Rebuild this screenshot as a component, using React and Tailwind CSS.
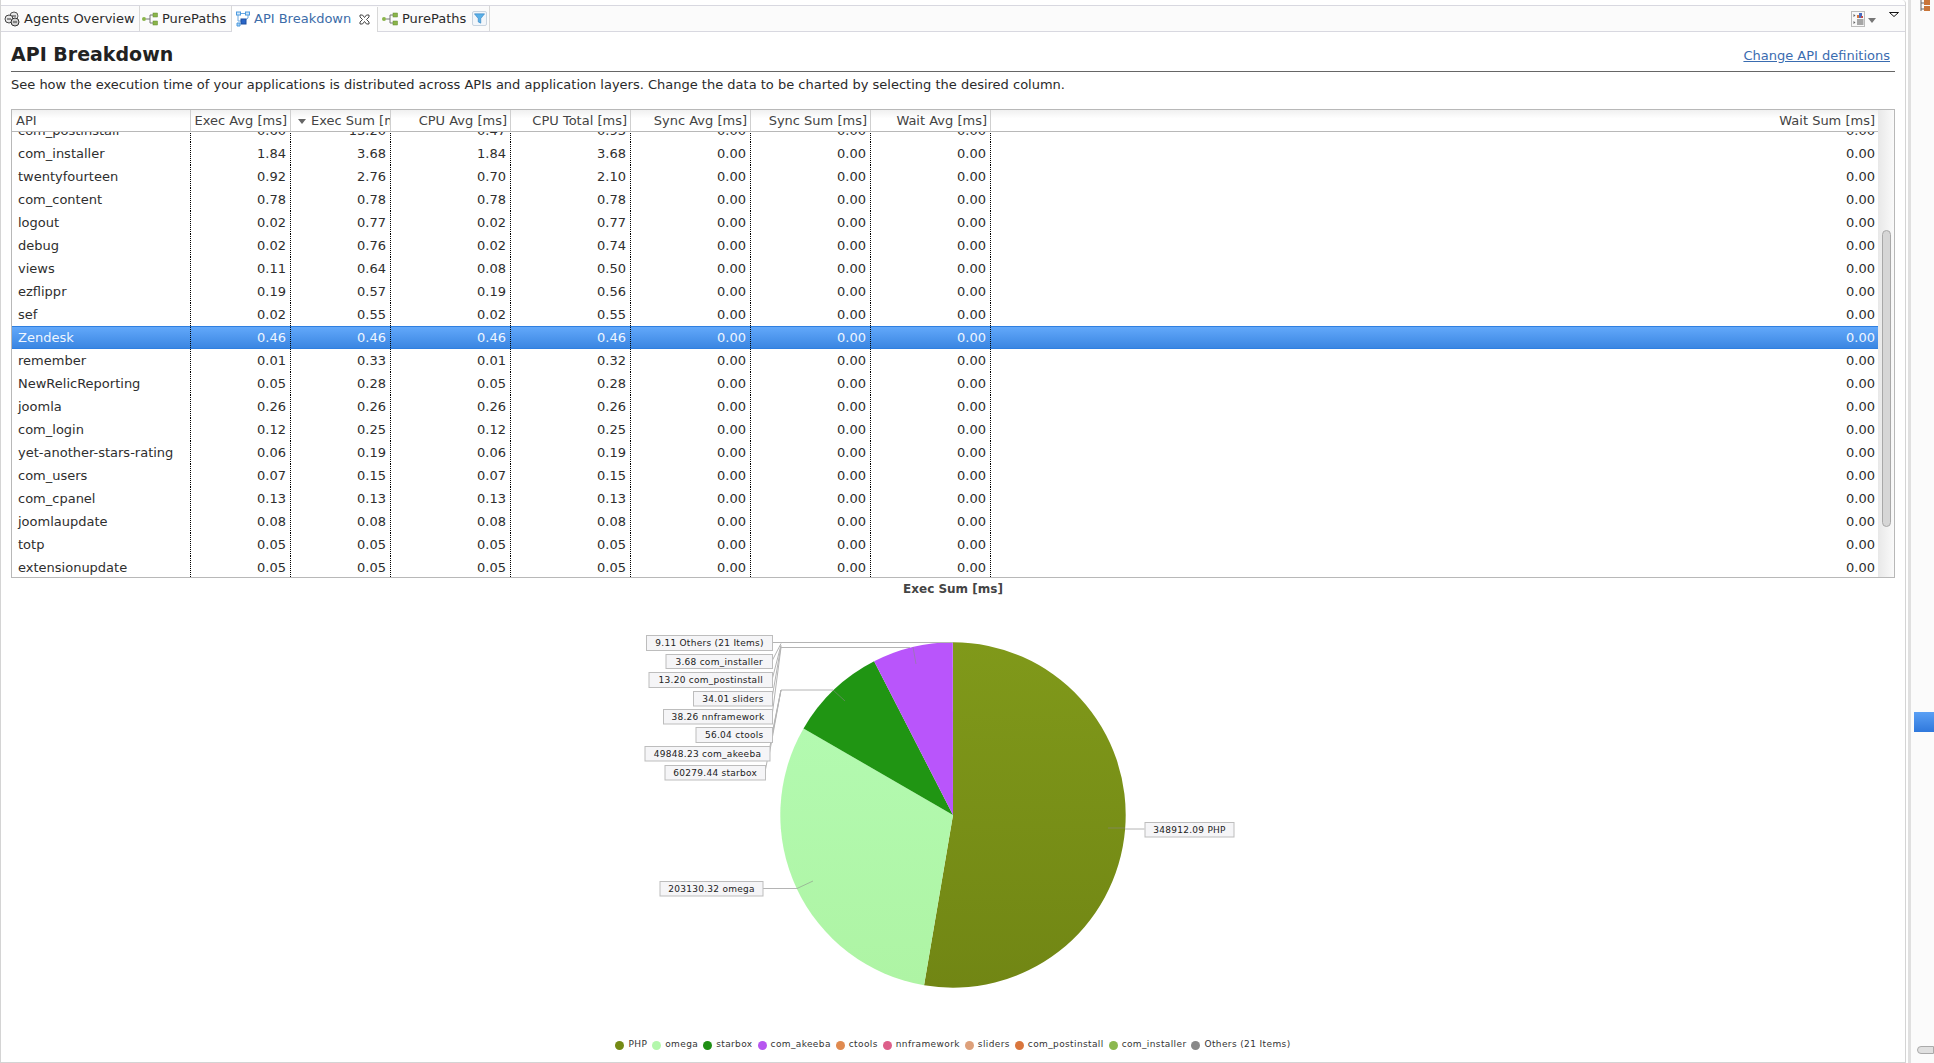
const rows = [
  ["com_postinstall", "0.60", "13.20", "0.47", "0.93"],
  ["com_installer", "1.84", "3.68", "1.84", "3.68"],
  ["twentyfourteen", "0.92", "2.76", "0.70", "2.10"],
  ["com_content", "0.78", "0.78", "0.78", "0.78"],
  ["logout", "0.02", "0.77", "0.02", "0.77"],
  ["debug", "0.02", "0.76", "0.02", "0.74"],
  ["views", "0.11", "0.64", "0.08", "0.50"],
  ["ezflippr", "0.19", "0.57", "0.19", "0.56"],
  ["sef", "0.02", "0.55", "0.02", "0.55"],
  ["Zendesk", "0.46", "0.46", "0.46", "0.46"],
  ["remember", "0.01", "0.33", "0.01", "0.32"],
  ["NewRelicReporting", "0.05", "0.28", "0.05", "0.28"],
  ["joomla", "0.26", "0.26", "0.26", "0.26"],
  ["com_login", "0.12", "0.25", "0.12", "0.25"],
  ["yet-another-stars-rating", "0.06", "0.19", "0.06", "0.19"],
  ["com_users", "0.07", "0.15", "0.07", "0.15"],
  ["com_cpanel", "0.13", "0.13", "0.13", "0.13"],
  ["joomlaupdate", "0.08", "0.08", "0.08", "0.08"],
  ["totp", "0.05", "0.05", "0.05", "0.05"],
  ["extensionupdate", "0.05", "0.05", "0.05", "0.05"],
];

const gridCols = "grid grid-cols-[179px_100px_100px_120px_120px_120px_120px_120px_1fr]";

const legend = [
  ["PHP", "bg-[#748a14]"],
  ["omega", "bg-[#b3f7ac]"],
  ["starbox", "bg-[#1f8f14]"],
  ["com_akeeba", "bg-[#b756f0]"],
  ["ctools", "bg-[#e08a4f]"],
  ["nnframework", "bg-[#dd5f8a]"],
  ["sliders", "bg-[#dda07a]"],
  ["com_postinstall", "bg-[#d9763d]"],
  ["com_installer", "bg-[#8cb84f]"],
  ["Others (21 Items)", "bg-[#888888]"],
];

// x, y, w, h, text
const labels = [
  [646, 635, 126, 15, "9.11 Others (21 Items)"],
  [665.5, 654, 106.5, 14, "3.68 com_installer"],
  [648.5, 672, 123.5, 15, "13.20 com_postinstall"],
  [693, 691, 79, 14.5, "34.01 sliders"],
  [663, 709, 109, 14.5, "38.26 nnframework"],
  [695.5, 727, 76.5, 15, "56.04 ctools"],
  [644.5, 746, 125, 14.5, "49848.23 com_akeeba"],
  [664.5, 765, 100.5, 14.5, "60279.44 starbox"],
  [1144.5, 822, 89, 14.5, "348912.09 PHP"],
  [659.5, 881, 103, 14.5, "203130.32 omega"],
];

const leaders = [
  "M772 642.5H953",
  "M772 661L781 643.5",
  "M772 680L781 645",
  "M772 698L781 646",
  "M772 716L781 647.5H910",
  "M772 734L781 690H833",
  "M769.5 753L781 690",
  "M765 772L781 690",
  "M1144.5 829H1125",
  "M762.5 888.5H797",
];

const slices = [
  [348912.09, "url(#phpFill)"],
  [203130.32, "url(#omegaFill)"],
  [60279.44, "#209513"],
  [49848.23, "#b955fb"],
  [154.26, "#b955fb"],
];

function piePaths() {
  const cx = 953, cy = 815, r = 172.7;
  const total = slices.reduce((s, x) => s + x[0], 0);
  let a = 0;
  return slices.map(([v, fill]) => {
    const b = a + (v / total) * Math.PI * 2;
    const d = `M${cx} ${cy}L${cx + r * Math.sin(a)} ${cy - r * Math.cos(a)}A${r} ${r} 0 ${b - a > Math.PI ? 1 : 0} 1 ${cx + r * Math.sin(b)} ${cy - r * Math.cos(b)}Z`;
    a = b;
    return <path key={v} d={d} fill={fill} />;
  });
}

function AgentsIcon() {
  return (
    <svg width="16" height="16" viewBox="0 0 16 16" className="shrink-0">
      <circle cx="10" cy="5" r="4" fill="#e8e8e8" stroke="#555" />
      <circle cx="5" cy="8" r="4" fill="#e8e8e8" stroke="#444" />
      <circle cx="11" cy="11" r="4" fill="#d0d0d0" stroke="#333" />
      <path d="M3 8h4M9 11h4M8 5h4" stroke="#333" />
    </svg>
  );
}

function PurePathIcon() {
  return (
    <svg width="16" height="14" viewBox="0 0 16 14" className="shrink-0">
      <path d="M4 7h4M8 3v8M8 3h3M8 11h3" stroke="#777" fill="none" />
      <circle cx="2" cy="7" r="2" fill="#8ab44a" />
      <rect x="11" y="1" width="4.5" height="4" fill="#8ab44a" stroke="#5f8a2c" strokeWidth="0.5" />
      <rect x="11" y="9" width="4.5" height="4" fill="#8ab44a" stroke="#5f8a2c" strokeWidth="0.5" />
    </svg>
  );
}

function BreakdownIcon() {
  return (
    <svg width="14" height="16" viewBox="0 0 14 16" className="shrink-0">
      <path d="M4 2.5h6M2 4v6h3M12 4v3l-4 3" stroke="#6aa8e0" fill="none" />
      <rect x="0.5" y="1" width="4" height="3" fill="#d4e8f8" stroke="#4b9ae0" />
      <rect x="9.5" y="1" width="4" height="3" fill="#d4e8f8" stroke="#4b9ae0" />
      <rect x="5" y="8" width="5" height="5" fill="#2a66c8" stroke="#1d4fa0" />
      <path d="M1 12h3v3H1z" fill="#a8d0f0" stroke="#4b9ae0" />
    </svg>
  );
}

function CloseIcon() {
  return (
    <svg width="11" height="11" viewBox="0 0 11 11" className="shrink-0">
      <path d="M1 1h2.5l2 2.5L7.5 1H10v2L7.5 5.5 10 8v2H7.5l-2-2.5-2 2.5H1V8l2.5-2.5L1 3z" fill="#fff" stroke="#333" strokeWidth="0.9" />
    </svg>
  );
}

function FilterIcon() {
  return (
    <span className="flex h-[15px] w-[15px] shrink-0 items-center justify-center rounded-[2px] border border-[#c8d4e0] bg-[#f2f6fa]">
      <svg width="11" height="11" viewBox="0 0 13 13">
        <path d="M0.5 1h12L8 6.5V12L5 10.5v-4z" fill="#5ab0e8" stroke="#2f7fc0" strokeWidth="0.7" />
      </svg>
    </span>
  );
}

function ViewMenuIcon() {
  return (
    <svg width="14" height="16" viewBox="0 0 14 16" className="shrink-0">
      <rect x="0.5" y="0.5" width="13" height="15" fill="#f8f8f8" stroke="#bbb" />
      <path d="M2.5 3l2 1.5-2 1.5zM2.5 10l2 1.5-2 1.5z" fill="#666" />
      <rect x="6" y="4" width="3" height="3" fill="#d9763d" />
      <rect x="8" y="2" width="3" height="5" fill="#4a6cc0" />
      <rect x="10" y="5" width="2" height="2" fill="#c05050" />
      <path d="M6 9h6.5M6 11h6.5M6 13h6.5" stroke="#555" />
    </svg>
  );
}

function Tab({ icon, label, active, children, className }) {
  return (
    <div className={`flex h-full items-center border-r border-[#d8d8d8] ${active ? "-mb-px bg-white text-[#3c6ca8]" : "text-[#2a2a2a]"} ${className}`}>
      {icon}
      <span className="whitespace-nowrap">{label}</span>
      {children}
    </div>
  );
}

function HeaderCell({ children, align = "text-right", className = "" }) {
  return (
    <div className={`overflow-hidden whitespace-nowrap border-r border-[#cfcfcf] pr-[3px] leading-[22px] text-[#444] ${align} ${className}`}>
      {children}
    </div>
  );
}

function Row({ cols }) {
  const selected = cols[0] === "Zendesk";
  const values = [...cols.slice(1), "0.00", "0.00", "0.00"];
  const cell = selected ? "leading-[21px]" : "pt-px leading-[22px]";
  return (
    <div className={`${gridCols} h-[23px] ${selected ? "border-t border-b border-[#2f7fe0] bg-gradient-to-b from-[#62a8fa] to-[#3a86e2] text-[#eef5ff]" : "text-[#2e2e2e]"}`}>
      <div className={`border-r border-dotted border-black pl-[6px] ${cell}`}>{cols[0]}</div>
      {values.map((v, i) => (
        <div key={i} className={`border-r border-dotted border-black pr-[4px] text-right ${cell}`}>{v}</div>
      ))}
      <div className={`pr-[3px] text-right ${cell}`}>0.00</div>
    </div>
  );
}

export default function App() {
  return (
    <div className="flex h-[1063px] w-[1934px] overflow-hidden bg-white font-['DejaVu_Sans',sans-serif] text-[13px]">
      <div className="flex h-full w-[1906px] shrink-0 flex-col rounded-tr-[4px] border-r border-b border-l border-[#d4d4d4] pt-[5px]">
        {/* tab strip */}
        <div className="flex h-[27px] shrink-0 items-center border-t border-b border-[#d8d8e0] bg-[#fbfbfb]">
          <Tab icon={<AgentsIcon />} label="Agents Overview" className="w-[139px] gap-[4px] pl-[3px]" />
          <Tab icon={<PurePathIcon />} label="PurePaths" className="w-[92px] gap-[4px] pl-[2px]" />
          <Tab icon={<BreakdownIcon />} label="API Breakdown" active className="w-[146px] gap-[4px] pl-[4px]">
            <span className="ml-[4px] flex"><CloseIcon /></span>
          </Tab>
          <Tab icon={<PurePathIcon />} label="PurePaths" className="w-[112px] gap-[4px] pl-[4px]">
            <span className="ml-[2px] flex"><FilterIcon /></span>
          </Tab>
          <div className="ml-auto flex h-full items-start pr-[6px] pt-[5px]">
            <ViewMenuIcon />
            <svg width="8" height="5" viewBox="0 0 8 5" className="ml-[3px] mt-[7px]">
              <path d="M0 0h8L4 5z" fill="#777" />
            </svg>
            <svg width="10" height="5" viewBox="0 0 10 5" className="ml-[13px] mt-[1px]">
              <path d="M0.5 0.5h9L5 4.5z" fill="#fff" stroke="#111" />
            </svg>
          </div>
        </div>

        {/* page header */}
        <div className="mx-[10px] flex h-[40px] shrink-0 items-end justify-between border-b border-[#666] pb-[4px] pr-[5px]">
          <h1 className="-mb-px text-[19px] font-bold leading-[28px] text-[#222]">API Breakdown</h1>
          <a className="mb-px leading-[20px] text-[#3a6cb0] underline">Change API definitions</a>
        </div>
        <p className="mx-[10px] mt-[2px] h-[22px] shrink-0 leading-[22px] text-[#2a2a2a]">
          See how the execution time of your applications is distributed across APIs and application layers. Change the data to be charted by selecting the desired column.
        </p>

        {/* table */}
        <div className="mx-[10px] mt-[13px] flex h-[469px] shrink-0 border border-[#b8b8b8]">
          <div className="flex min-w-0 flex-1 flex-col">
            <div className={`${gridCols} h-[22px] shrink-0 border-b border-[#b8b8b8] bg-gradient-to-b from-[#f0f0f0] to-white to-40%`}>
              <HeaderCell align="text-left" className="pl-[4px]">API</HeaderCell>
              <HeaderCell>Exec Avg [ms]</HeaderCell>
              <HeaderCell align="text-left" className="pl-[7px]">
                <span className="mr-[5px] inline-block h-0 w-0 border-x-[4px] border-t-[5px] border-x-transparent border-t-[#666] align-middle" />
                Exec Sum [ms]
              </HeaderCell>
              <HeaderCell>CPU Avg [ms]</HeaderCell>
              <HeaderCell>CPU Total [ms]</HeaderCell>
              <HeaderCell>Sync Avg [ms]</HeaderCell>
              <HeaderCell>Sync Sum [ms]</HeaderCell>
              <HeaderCell>Wait Avg [ms]</HeaderCell>
              <HeaderCell className="border-r-0">Wait Sum [ms]</HeaderCell>
            </div>
            <div className="flex min-h-0 flex-1 flex-col justify-end overflow-hidden">
              <div className="-mb-[2px]">
                {rows.map((r) => <Row key={r[0]} cols={r} />)}
              </div>
            </div>
          </div>
          <div className="w-[16px] shrink-0 bg-gradient-to-r from-[#e8e8e8] to-[#fafafa] pl-[4px]">
            <div className="mt-[120px] h-[297px] w-[9px] rounded-[5px] border border-[#a8a8a8] bg-[#d6d6d6]" />
          </div>
        </div>

        <div className="h-[20px] shrink-0 pt-px text-center text-[12px] font-bold leading-[20px] text-[#444]">Exec Sum [ms]</div>

        {/* pie chart with its callouts */}
        <svg width="1904" height="432" viewBox="1 598 1904 432" className="shrink-0">
          <defs>
            <linearGradient id="phpFill" x1="0" y1="0" x2="0" y2="1">
              <stop offset="0" stopColor="#80991a" />
              <stop offset="1" stopColor="#718614" />
            </linearGradient>
            <linearGradient id="omegaFill" x1="0" y1="0" x2="0" y2="1">
              <stop offset="0" stopColor="#b3fab0" />
              <stop offset="1" stopColor="#aef4a4" />
            </linearGradient>
          </defs>
          {piePaths()}
          <path d="M833 690l12 11M913 647l3 17M1108 828h17M797 888.5l16-7.5" stroke="#888" strokeOpacity="0.55" fill="none" />
          {leaders.map((d) => <path key={d} d={d} stroke="#b4b4b4" fill="none" />)}
          {labels.map(([x, y, w, h, text]) => (
            <g key={text}>
              <rect x={x + 0.5} y={y + 0.5} width={w} height={h} fill="#f5f5f7" stroke="#bdbdbd" />
              <text x={x + w / 2 + 0.5} y={y + h / 2 + 3.5} textAnchor="middle" fontSize="9" letterSpacing="0.27" fill="#222">{text}</text>
            </g>
          ))}
        </svg>

        {/* legend */}
        <div className="flex h-[28px] shrink-0 items-center justify-center gap-[5px] pt-[2px] text-[9px] tracking-[0.38px] text-[#333]">
          {legend.map(([name, color]) => (
            <div key={name} className="flex items-center gap-[4px] whitespace-nowrap">
              <span className={`h-[9px] w-[9px] rounded-full ${color}`} />
              {name}
            </div>
          ))}
        </div>
      </div>

      {/* collapsed side panel */}
      <div className="ml-[2px] flex h-full flex-1 flex-col border-l-[3px] border-[#e0e0e0] bg-[#fbfbfb]">
        <div className="flex h-[12px] justify-end pr-[3px]">
          <svg width="12" height="12" viewBox="0 0 12 12">
            <path d="M2 0v11M2 3h3M2 9h3" stroke="#666" fill="none" />
            <rect x="5" y="0" width="6" height="5" fill="#c9763a" />
            <rect x="5" y="6" width="6" height="5" fill="#c9763a" />
          </svg>
        </div>
        <div className="mt-[700px] ml-[3px] h-[20px] bg-gradient-to-b from-[#5aa0f5] to-[#2f78dc]" />
        <div className="mt-[314px] ml-[6px] h-[8px] rounded-l-[4px] border border-[#aaa] bg-[#e0e0e0]" />
      </div>
    </div>
  );
}
